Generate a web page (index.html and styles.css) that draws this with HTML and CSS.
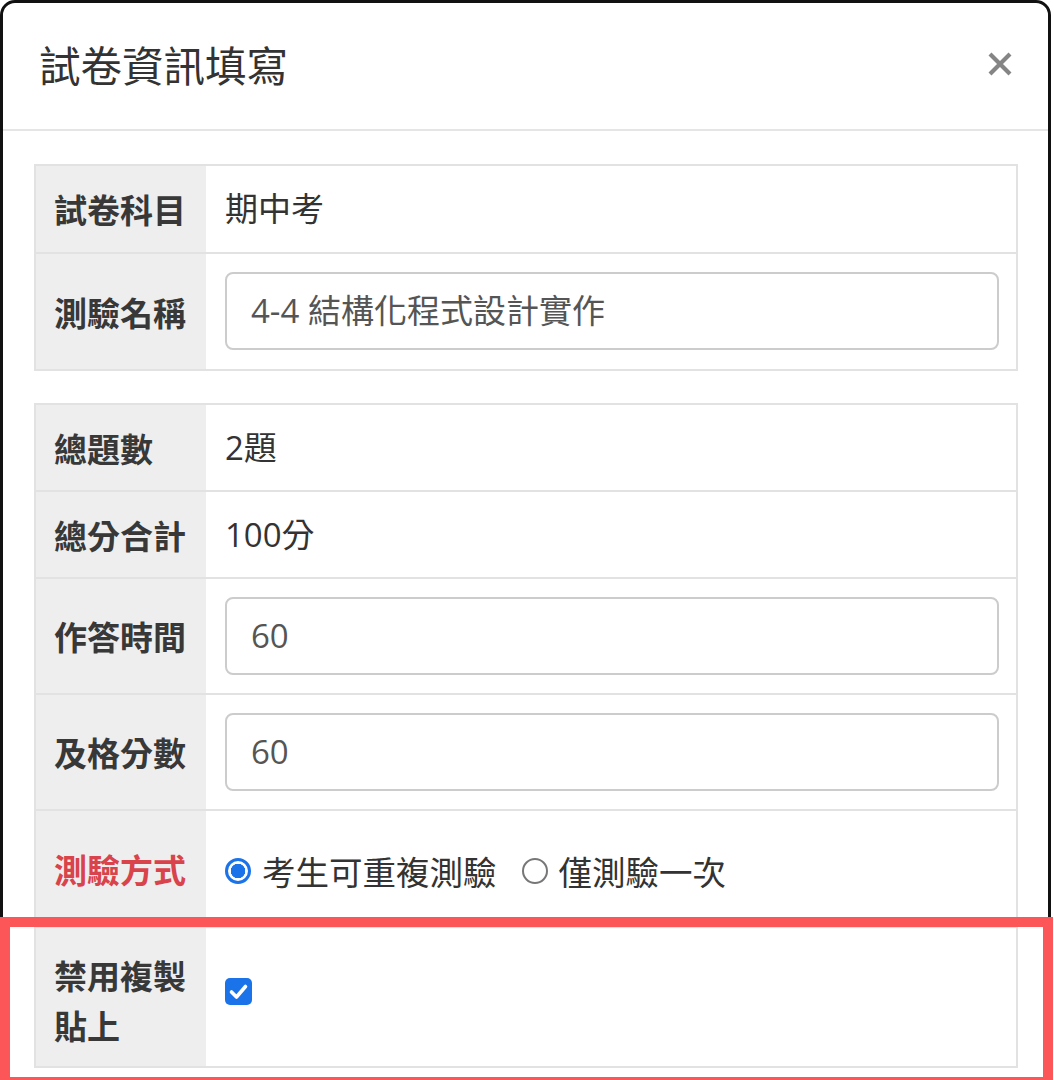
FILE: index.html
```html
<!DOCTYPE html>
<html lang="zh-Hant">
<head>
<meta charset="utf-8">
<title>試卷資訊填寫</title>
<link rel="stylesheet" href="styles.css">
</head>
<body>
<div class="modal">
  <div class="modal-header">
    <h4 class="modal-title">試卷資訊填寫</h4>
    <button class="close" aria-label="Close">
      <svg width="26" height="26" viewBox="0 0 26 26"><path d="M3 3 L23 23 M23 3 L3 23" stroke="#858585" stroke-width="4.2" stroke-linecap="butt"/></svg>
    </button>
  </div>
  <div class="modal-body">
    <div class="info-table info-table-top">
      <div class="row row-text">
        <div class="label">試卷科目</div>
        <div class="value">期中考</div>
      </div>
      <div class="row row-input">
        <div class="label">測驗名稱</div>
        <div class="value"><div class="input">4-4 結構化程式設計實作</div></div>
      </div>
    </div>

    <div class="info-table">
      <div class="row row-text">
        <div class="label">總題數</div>
        <div class="value">2題</div>
      </div>
      <div class="row row-text">
        <div class="label">總分合計</div>
        <div class="value">100分</div>
      </div>
      <div class="row row-input">
        <div class="label">作答時間</div>
        <div class="value"><div class="input">60</div></div>
      </div>
      <div class="row row-input">
        <div class="label">及格分數</div>
        <div class="value"><div class="input">60</div></div>
      </div>
      <div class="row row-radio">
        <div class="label label-red">測驗方式</div>
        <div class="value">
          <label class="radio-item"><span class="radio checked"></span>考生可重複測驗</label>
          <label class="radio-item"><span class="radio"></span>僅測驗一次</label>
        </div>
      </div>
      <div class="row row-check">
        <div class="label label-wrap">禁用複製<br>貼上</div>
        <div class="value">
          <span class="checkbox">
            <svg width="27" height="27" viewBox="0 0 27 27"><path d="M6.5 14 L11.5 19 L20.5 8.5" fill="none" stroke="#fff" stroke-width="3.6" stroke-linecap="round" stroke-linejoin="round"/></svg>
          </span>
        </div>
      </div>
    </div>
  </div>
</div>
<div class="highlight"></div>
</body>
</html>
```

FILE: styles.css
```css
html, body {
  margin: 0;
  padding: 0;
  background: #ffffff;
}

body {
  width: 1054px;
  height: 1080px;
  overflow: hidden;
  position: relative;
  font-family: "Open Sans", "Noto Sans CJK TC", sans-serif;
  color: #333333;
}

.modal {
  width: 1051px;
  box-sizing: border-box;
  height: 1200px;
  border: 3px solid #111111;
  border-radius: 15px 15px 0 0;
  background: #ffffff;
}

.modal-header {
  height: 128px;
  padding: 0 36px 4px 36px;
  box-sizing: border-box;
  display: flex;
  align-items: center;
  justify-content: space-between;
  border-bottom: 2px solid #e5e5e5;
}

.modal-title {
  margin: 0;
  font-family: "Noto Sans CJK TC", sans-serif;
  font-weight: 400;
  font-size: 41.5px;
  line-height: 46px;
  color: #333333;
}

.close {
  border: 0;
  background: transparent;
  padding: 0;
  margin-right: -1px;
  display: flex;
}

.modal-body {
  padding: 33px 30px 0 31px;
  display: flex;
  flex-direction: column;
  gap: 32px;
}

.info-table {
  border: 2px solid #e2e2e2;
}

.row {
  display: grid;
  grid-template-columns: 170px 1fr;
  border-top: 2px solid #e2e2e2;
}

.row:first-child {
  border-top: 0;
}

.label {
  background: #eeeeee;
  padding: 0 18px;
  display: flex;
  align-items: center;
  font-family: "Noto Sans CJK TC", sans-serif;
  font-weight: 700;
  font-size: 33px;
  line-height: 48px;
  color: #383838;
}

.label-red {
  color: #d9434b;
}

.label-wrap {
  line-height: 50px;
  padding-top: 6px;
}

.value {
  padding: 0 17px 0 19px;
  display: flex;
  align-items: center;
  font-size: 33px;
  line-height: 48px;
  color: #333333;
}

.row-text {
  height: 85px;
}

.row-input {
  height: 114px;
}

.info-table-top .row-text {
  height: 86px;
}

.info-table-top .row-input {
  height: 115px;
}

.row-radio {
  height: 115px;
}

.row-check {
  height: 138px;
}

.input {
  flex: 1;
  height: 78px;
  box-sizing: border-box;
  border: 2px solid #cccccc;
  border-radius: 8px;
  padding: 0 24px;
  display: flex;
  align-items: center;
  font-size: 33px;
  color: #555555;
  margin-top: -1px;
}

.radio-item {
  display: inline-flex;
  align-items: center;
  margin-right: 25px;
  font-family: "Noto Sans CJK TC", sans-serif;
  font-size: 33.5px;
  padding-top: 4px;
}

.radio {
  width: 26px;
  height: 26px;
  box-sizing: border-box;
  border-radius: 50%;
  border: 2px solid #777777;
  margin-right: 11px;
  flex: none;
}

.radio.checked {
  border: 3px solid #1a73e8;
  background: radial-gradient(circle, #1a73e8 0 7px, #ffffff 7.5px);
}

.checkbox {
  width: 27px;
  height: 27px;
  border-radius: 5px;
  background: #1a73e8;
  display: flex;
  margin-top: -12px;
}

.highlight {
  position: absolute;
  left: 0;
  top: 917px;
  width: 1053px;
  height: 170px;
  box-sizing: border-box;
  border: 10px solid #fd5659;
  pointer-events: none;
}
```
